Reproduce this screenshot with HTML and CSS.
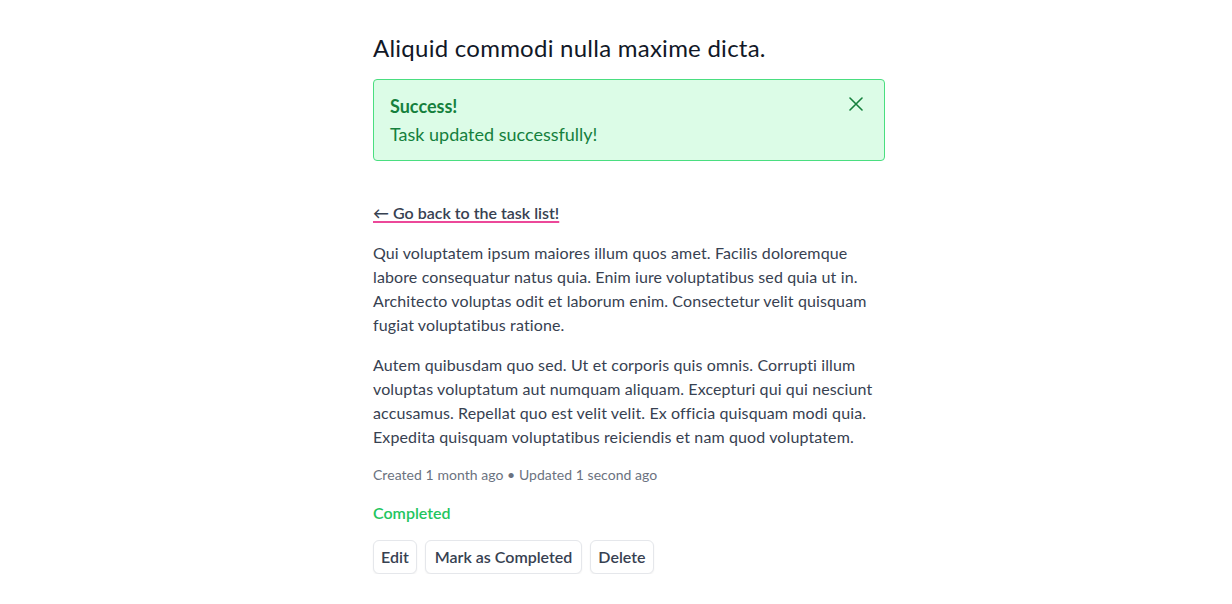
FILE: index.html
```html
<!DOCTYPE html>
<html lang="en">
<head>
<meta charset="utf-8">
<title>Task</title>
<link rel="stylesheet" href="styles.css">
</head>
<body>
<main class="page">
  <h1 class="title">Aliquid commodi nulla maxime dicta.</h1>
  <div class="alert">
    <div class="alert-body">
      <div class="alert-title">Success!</div>
      <div class="alert-text">Task updated successfully!</div>
    </div>
    <button class="alert-close" aria-label="Close">
      <svg width="14" height="14" viewBox="0 0 14 14" fill="none" stroke="currentColor" stroke-width="1.6" stroke-linecap="round"><path d="M1 1L13 13M13 1L1 13"/></svg>
    </button>
  </div>
  <a class="back" href="#">← Go back to the task list!</a>
  <p class="para">Qui voluptatem ipsum maiores illum quos amet. Facilis doloremque<br>labore consequatur natus quia. Enim iure voluptatibus sed quia ut in.<br>Architecto voluptas odit et laborum enim. Consectetur velit quisquam<br>fugiat voluptatibus ratione.</p>
  <p class="para">Autem quibusdam quo sed. Ut et corporis quis omnis. Corrupti illum<br>voluptas voluptatum aut numquam aliquam. Excepturi qui qui nesciunt<br>accusamus. Repellat quo est velit velit. Ex officia quisquam modi quia.<br>Expedita quisquam voluptatibus reiciendis et nam quod voluptatem.</p>
  <div class="meta">Created 1 month ago • Updated 1 second ago</div>
  <div class="status">Completed</div>
  <div class="actions">
    <button class="btn">Edit</button>
    <button class="btn btn-wide">Mark as Completed</button>
    <button class="btn">Delete</button>
  </div>
</main>
</body>
</html>
```
FILE: styles.css
```css
* { box-sizing: border-box; }
html, body { margin: 0; padding: 0; background: #fff; }
body {
  font-family: "Lato", "Open Sans", sans-serif;
  color: #374151;
  font-size: 16px;
  line-height: 24px;
}
.page {
  width: 512px;
  margin-left: calc(50% - 243px);
  padding-top: 32px;
  display: flex;
  flex-direction: column;
  align-items: flex-start;
}
.title {
  margin: 0 0 15px;
  font-size: 24px;
  line-height: 32px;
  font-weight: 400;
  letter-spacing: 0.25px;
  color: #111827;
}
.alert {
  width: 512px;
  display: flex;
  justify-content: space-between;
  align-items: flex-start;
  background: #dcfce7;
  border: 1px solid #4ade80;
  border-radius: 4px;
  padding: 14px 21px 14px 16px;
  color: #15803d;
  margin-bottom: 40px;
}
.alert-title { font-weight: 700; font-size: 18px; }
.alert-text { margin-top: 4px; font-size: 18px; }
.alert-close {
  background: none;
  border: 0;
  padding: 0;
  margin-top: 3px;
  color: #15803d;
  display: flex;
}
.back {
  color: #374151;
  font-weight: 600;
  text-decoration: underline;
  text-decoration-color: #ec4899;
  text-underline-offset: 2px;
  text-decoration-thickness: 2px;
  margin-bottom: 16px;
}
.para { margin: 0 0 16px; letter-spacing: 0.12px; }
.meta { font-size: 14px; line-height: 20px; color: #6b7280; margin-bottom: 16px; letter-spacing: 0.05px; }
.status { color: #22c55e; font-weight: 600; margin-bottom: 15px; }
.actions { display: flex; gap: 8px; }
.btn {
  font-family: inherit;
  font-size: 16px;
  line-height: 24px;
  font-weight: 600;
  color: #374151;
  background: #fff;
  border: 1px solid #e5e7eb;
  border-radius: 6px;
  padding: 4px 7px;
  box-shadow: 0 1px 2px rgba(0,0,0,0.06);
}
.btn-wide { padding: 4px 9px; }
```
